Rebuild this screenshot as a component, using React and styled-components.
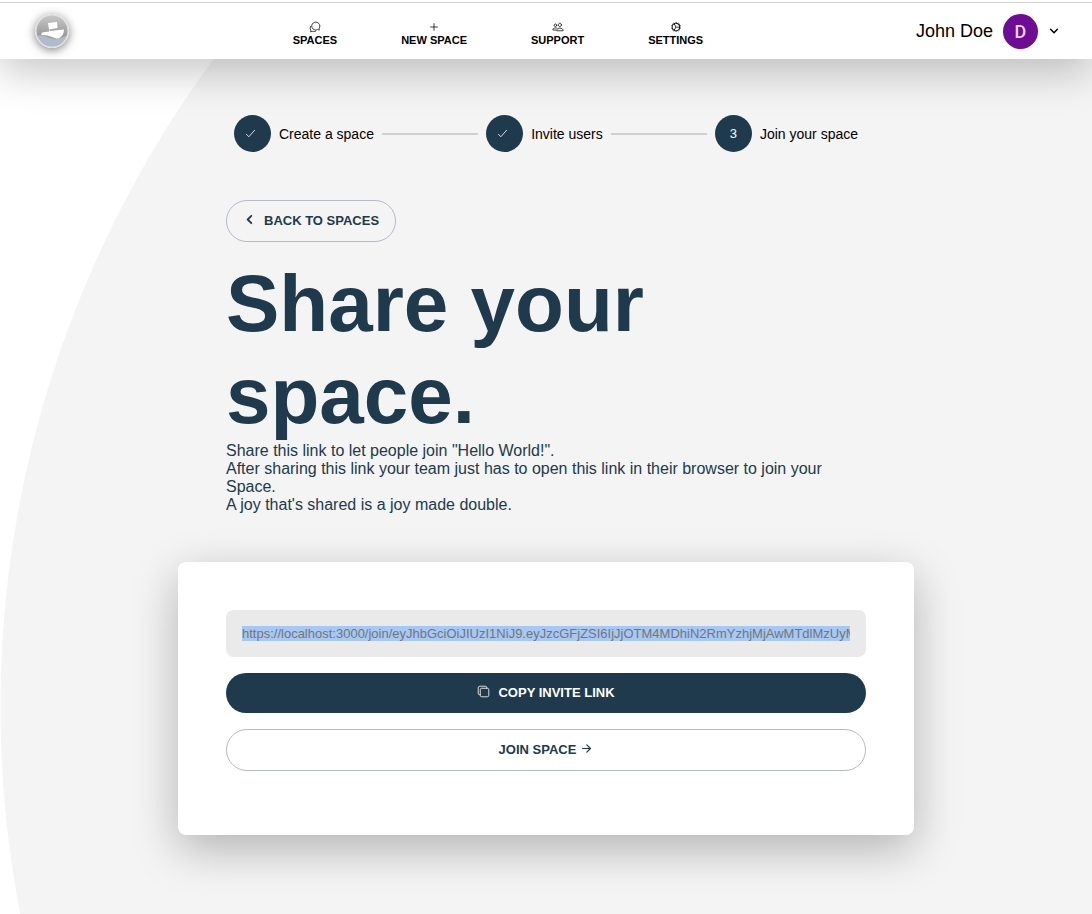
import React from "react";
import styled, { createGlobalStyle } from "styled-components";
import {
  IoAddOutline,
  IoArrowForward,
  IoChatbubblesOutline,
  IoCheckmarkOutline,
  IoChevronBack,
  IoChevronDown,
  IoCogOutline,
  IoCopyOutline,
  IoPeopleOutline,
} from "react-icons/io5";

const navy = "#203a4d";
const outline = "#b4bacb";

const GlobalStyle = createGlobalStyle`
  *, *::before, *::after { box-sizing: border-box; }
  body {
    margin: 0;
    background: #fff;
    color: #000;
    font-family: "Liberation Sans", Arial, Helvetica, sans-serif;
  }
`;

const Page = styled.div`
  min-height: 100vh;
  background: radial-gradient(
    circle at 100vw 707px,
    #f4f4f4 calc(100vw - 1px),
    #fff 100vw
  );
`;

const Header = styled.header`
  display: flex;
  align-items: center;
  justify-content: space-between;
  height: 59px;
  padding: 1px 32px 0;
  background: #fff;
  border-top: 2px solid #fff;
  box-shadow:
    inset 0 1px #d2d2d2,
    0 14px 40px rgba(0, 0, 0, 0.22);
`;

const LogoLink = styled.a`
  display: flex;
  justify-content: center;
  width: 40px;
  margin-right: 8px;
`;

const LogoMark = styled.svg`
  width: 34px;
  height: 34px;
  border-radius: 50%;
  box-shadow: 0 2px 10px rgba(0, 0, 0, 0.5);
`;

const Nav = styled.nav`
  display: flex;
  gap: 64px;
`;

const NavLink = styled.a`
  display: flex;
  flex-direction: column;
  align-items: center;
  gap: 1px;
  padding-top: 6px;
  color: #000;
  font-size: 11px;
  font-weight: 700;
  line-height: 13px;
  text-decoration: none;
  text-transform: uppercase;
`;

const Account = styled.button`
  display: flex;
  align-items: center;
  gap: 10px;
  padding: 0;
  border: 0;
  background: none;
  color: #000;
  font: inherit;
  font-size: 18px;
  cursor: pointer;
`;

const Avatar = styled.span`
  display: grid;
  place-items: center;
  width: 35px;
  height: 35px;
  border-radius: 50%;
  background: #6f0c96;
  color: #eadcf0;
  font-family: Roboto, sans-serif;
  font-size: 18px;
  font-weight: 500;
`;

const Main = styled.main`
  max-width: 736px;
  margin: 0 auto;
  padding: 56px 0 72px;
`;

const Intro = styled.section`
  padding: 0 48px;
`;

const Stepper = styled.ol`
  display: flex;
  align-items: center;
  margin: 0 0 48px;
  padding: 0 8px;
  list-style: none;
`;

const Step = styled.li`
  display: flex;
  align-items: center;
  flex: ${({ $last }) => ($last ? "none" : "1 0 auto")};
  gap: 8px;
  font-size: 14px;
  line-height: 20px;

  &:not(:last-child)::after {
    content: "";
    flex: 1;
    height: 2px;
    margin-right: 8px;
    background: #cfcfcf;
  }
`;

const StepBadge = styled.span`
  display: grid;
  place-items: center;
  width: 37px;
  height: 37px;
  padding-right: ${({ $done }) => ($done ? "4px" : "0")};
  border-radius: 50%;
  background: ${navy};
  color: #fff;
  font-size: 13px;
`;

const Button = styled.button`
  display: flex;
  align-items: center;
  justify-content: center;
  gap: ${({ $gap }) => $gap || "8px"};
  padding: 12px 16px;
  border: ${({ $filled }) => ($filled ? "0" : `1px solid ${outline}`)};
  border-radius: 21px;
  background: ${({ $filled }) => ($filled ? navy : "transparent")};
  color: ${({ $filled }) => ($filled ? "#fff" : navy)};
  font-family: inherit;
  font-size: 13px;
  font-weight: 700;
  line-height: 16px;
  text-transform: uppercase;
  cursor: pointer;

  svg {
    margin-bottom: 3px;
  }
`;

const BackButton = styled(Button)`
  path {
    stroke-width: 72px !important;
  }
`;

const DownChevron = styled(IoChevronDown)`
  path {
    stroke-width: 64px !important;
  }
`;

const Title = styled.h1`
  margin: 16px 0 0;
  color: ${navy};
  font-size: 80px;
  font-weight: 700;
  line-height: 92px;
`;

const Lead = styled.p`
  margin: 0;
  color: ${navy};
  font-size: 16px;
  line-height: 18px;
`;

const Card = styled.section`
  display: grid;
  gap: 16px;
  margin-top: 48px;
  padding: 48px 48px 64px;
  border-radius: 8px;
  background: #fff;
  box-shadow: 0 14px 46px rgba(0, 0, 0, 0.27);
`;

const LinkField = styled.input`
  width: 100%;
  height: 47px;
  padding: 16px;
  border: 0;
  border-radius: 8px;
  outline: 0;
  background: linear-gradient(#a6c8f5, #a6c8f5) content-box, #eaeaea;
  color: #757575;
  font-family: inherit;
  font-size: 13px;
  line-height: 15px;
`;

const navItems = [
  { label: "Spaces", Icon: IoChatbubblesOutline },
  { label: "New space", Icon: IoAddOutline },
  { label: "Support", Icon: IoPeopleOutline },
  { label: "Settings", Icon: IoCogOutline },
];

const steps = [
  { label: "Create a space", done: true },
  { label: "Invite users", done: true },
  { label: "Join your space", done: false },
];

const inviteLink =
  "https://localhost:3000/join/eyJhbGciOiJIUzI1NiJ9.eyJzcGFjZSI6IjJjOTM4MDhiN2RmYzhjMjAwMTdlMzUyMGQifQ";

function Logo() {
  return (
    <LogoMark viewBox="0 0 34 34" aria-hidden="true">
      <defs>
        <linearGradient id="sky" x1="0" y1="0" x2="0" y2="1">
          <stop offset="0" stopColor="#c9c9c9" />
          <stop offset="0.65" stopColor="#999" />
        </linearGradient>
        <clipPath id="disc">
          <circle cx="17" cy="17" r="16" />
        </clipPath>
      </defs>
      <circle cx="17" cy="17" r="16" fill="url(#sky)" />
      <path
        clipPath="url(#disc)"
        d="M0 22C6 20 10 22 14 23.500C20 26 25 25.500 34 20V34H0Z"
        fill="#afbacb"
      />
      <path d="M13 9L22 8L22.500 14L14 15.500Z" fill="#fff" />
      <path
        d="M7 18.500L14 17.500L14 15.500L15 17L29 15.500C29 20 27 23 23.500 24.500C19 25 15 20.500 6 21Z"
        fill="#fff"
      />
      <circle cx="17" cy="17" r="16.200" fill="none" stroke="#dedede" strokeWidth="1.600" />
    </LogoMark>
  );
}

export default function App() {
  return (
    <>
      <GlobalStyle />
      <Page>
        <Header>
          <LogoLink href="#home" aria-label="Home">
            <Logo />
          </LogoLink>
          <Nav>
            {navItems.map(({ label, Icon }) => (
              <NavLink key={label} href="#">
                <Icon size={12} />
                {label}
              </NavLink>
            ))}
          </Nav>
          <Account type="button">
            John Doe
            <Avatar>D</Avatar>
            <DownChevron size={12} />
          </Account>
        </Header>
        <Main>
          <Intro>
            <Stepper>
              {steps.map(({ label, done }, i) => (
                <Step key={label} $last={i === steps.length - 1}>
                  <StepBadge $done={done}>
                    {done ? <IoCheckmarkOutline size={13} /> : i + 1}
                  </StepBadge>
                  {label}
                </Step>
              ))}
            </Stepper>
            <BackButton type="button">
              <IoChevronBack size={13} />
              <span>Back to spaces</span>
            </BackButton>
            <Title>Share your space.</Title>
            <Lead>
              Share this link to let people join "Hello World!".
              <br />
              After sharing this link your team just has to open this link in
              their browser to join your Space.
              <br />A joy that's shared is a joy made double.
            </Lead>
          </Intro>
          <Card>
            <LinkField
              type="text"
              aria-label="Invite link"
              readOnly
              value={inviteLink}
            />
            <Button type="button" $filled>
              <IoCopyOutline size={13} />
              <span>Copy invite link</span>
            </Button>
            <Button type="button" $gap="4px">
              <span>Join space</span>
              <IoArrowForward size={13} />
            </Button>
          </Card>
        </Main>
      </Page>
    </>
  );
}
